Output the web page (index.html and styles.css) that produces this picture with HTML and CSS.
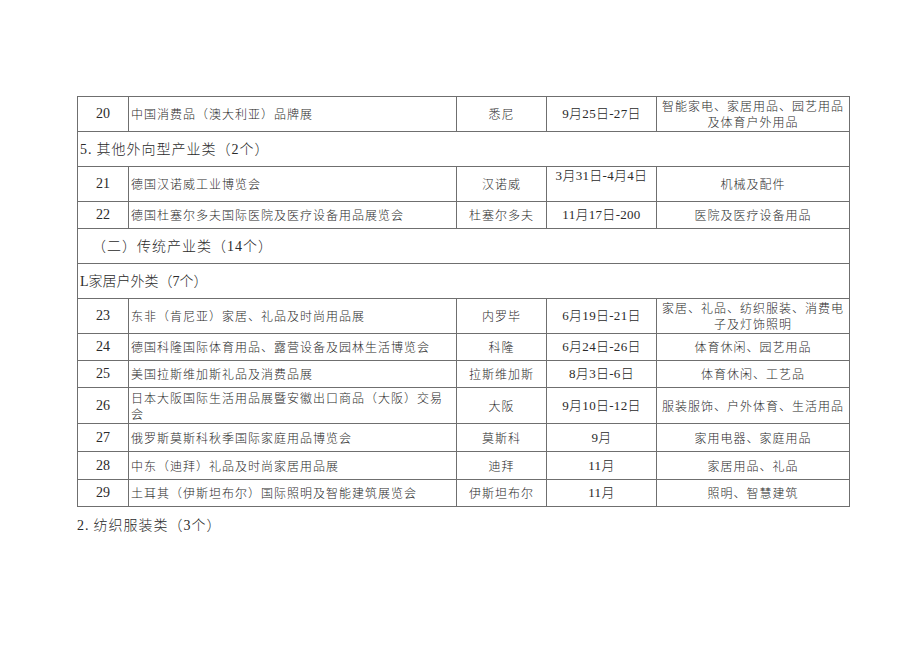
FILE: index.html
```html
<!DOCTYPE html>
<html lang="zh-CN">
<head>
<meta charset="utf-8">
<title>展会列表</title>
<link rel="stylesheet" href="styles.css">
</head>
<body>
<div class="page">
  <table class="fairs">
    <colgroup>
      <col class="c-no"><col class="c-name"><col class="c-city"><col class="c-date"><col class="c-desc">
    </colgroup>
    <tbody>
      <tr class="h35">
        <td class="no">20</td><td class="name">中国消费品（澳大利亚）品牌展</td><td class="city">悉尼</td><td class="date">9月25日-27日</td><td class="desc">智能家电、家居用品、园艺用品及体育户外用品</td>
      </tr>
      <tr class="h35"><td class="head wide" colspan="5"><span class="num">5.</span> 其他外向型产业类（<span class="num">2</span>个）</td></tr>
      <tr class="h35">
        <td class="no">21</td><td class="name">德国汉诺威工业博览会</td><td class="city">汉诺威</td><td class="date top">3月31日-4月4日</td><td class="desc">机械及配件</td>
      </tr>
      <tr class="h27">
        <td class="no">22</td><td class="name">德国杜塞尔多夫国际医院及医疗设备用品展览会</td><td class="city">杜塞尔多夫</td><td class="date">11月17日-200</td><td class="desc">医院及医疗设备用品</td>
      </tr>
      <tr class="h35"><td class="head wide indent" colspan="5">（二）传统产业类（<span class="num">14</span>个）</td></tr>
      <tr class="h35"><td class="head" colspan="5"><span class="num">L</span>家居户外类（<span class="num">7</span>个）</td></tr>
      <tr class="h35">
        <td class="no">23</td><td class="name">东非（肯尼亚）家居、礼品及时尚用品展</td><td class="city">内罗毕</td><td class="date">6月19日-21日</td><td class="desc">家居、礼品、纺织服装、消费电子及灯饰照明</td>
      </tr>
      <tr class="h27">
        <td class="no">24</td><td class="name">德国科隆国际体育用品、露营设备及园林生活博览会</td><td class="city">科隆</td><td class="date">6月24日-26日</td><td class="desc">体育休闲、园艺用品</td>
      </tr>
      <tr class="h27">
        <td class="no">25</td><td class="name">美国拉斯维加斯礼品及消费品展</td><td class="city">拉斯维加斯</td><td class="date">8月3日-6日</td><td class="desc">体育休闲、工艺品</td>
      </tr>
      <tr class="h36">
        <td class="no">26</td><td class="name">日本大阪国际生活用品展暨安徽出口商品（大阪）交易会</td><td class="city">大阪</td><td class="date">9月10日-12日</td><td class="desc">服装服饰、户外体育、生活用品</td>
      </tr>
      <tr class="h28">
        <td class="no">27</td><td class="name">俄罗斯莫斯科秋季国际家庭用品博览会</td><td class="city">莫斯科</td><td class="date">9月</td><td class="desc">家用电器、家庭用品</td>
      </tr>
      <tr class="h28">
        <td class="no">28</td><td class="name">中东（迪拜）礼品及时尚家居用品展</td><td class="city">迪拜</td><td class="date">11月</td><td class="desc">家居用品、礼品</td>
      </tr>
      <tr class="h27">
        <td class="no">29</td><td class="name">土耳其（伊斯坦布尔）国际照明及智能建筑展览会</td><td class="city">伊斯坦布尔</td><td class="date">11月</td><td class="desc">照明、智慧建筑</td>
      </tr>
    </tbody>
  </table>
  <p class="after"><span class="num">2.</span> 纺织服装类（<span class="num">3</span>个）</p>
</div>
</body>
</html>
```

FILE: styles.css
```css
html, body {
  margin: 0;
  padding: 0;
  background: #ffffff;
}

body {
  font-family: "Liberation Serif", "Noto Sans CJK SC", serif;
  color: #2a2a2a;
}

.page {
  padding: 96px 0 0 77px;
}

.fairs {
  border-collapse: collapse;
  table-layout: fixed;
  width: 772px;
}

.c-no { width: 51px; }
.c-name { width: 328px; }
.c-city { width: 90px; }
.c-date { width: 110px; }
.c-desc { width: 193px; }

.fairs td {
  border: 1px solid #6f6f6f;
  padding: 0 2px;
  vertical-align: middle;
  line-height: 16px;
  overflow: hidden;
}

.h35 { height: 35px; }
.h27 { height: 27px; }
.h36 { height: 36px; }
.h28 { height: 28px; }

.no {
  text-align: center;
  font-size: 14px;
}

.name, .city, .desc {
  font-family: "Noto Sans CJK SC", sans-serif;
  font-weight: 300;
  font-size: 12px;
  letter-spacing: 1px;
}

.name { padding-left: 3px; }

.city, .desc { text-align: center; }

.desc { padding: 0 1px 0 3px; }

.date {
  text-align: center;
  font-size: 13px;
  font-weight: 300;
  letter-spacing: 0.3px;
  font-family: "Liberation Serif", "Noto Sans CJK SC", serif;
}

.date.top {
  vertical-align: top;
  padding-top: 1px;
}

.head {
  font-family: "Noto Sans CJK SC", sans-serif;
  font-weight: 300;
  font-size: 14px;
  padding-left: 0;
}

.head.wide { letter-spacing: 1px; }

.head.indent { padding-left: 14px; }

.num {
  font-family: "Liberation Serif", serif;
  font-weight: 400;
}

.after {
  margin: 7px 0 0 0;
  font-family: "Noto Sans CJK SC", sans-serif;
  font-weight: 300;
  font-size: 14px;
  letter-spacing: 1px;
  line-height: 20px;
  color: #2a2a2a;
}
```
